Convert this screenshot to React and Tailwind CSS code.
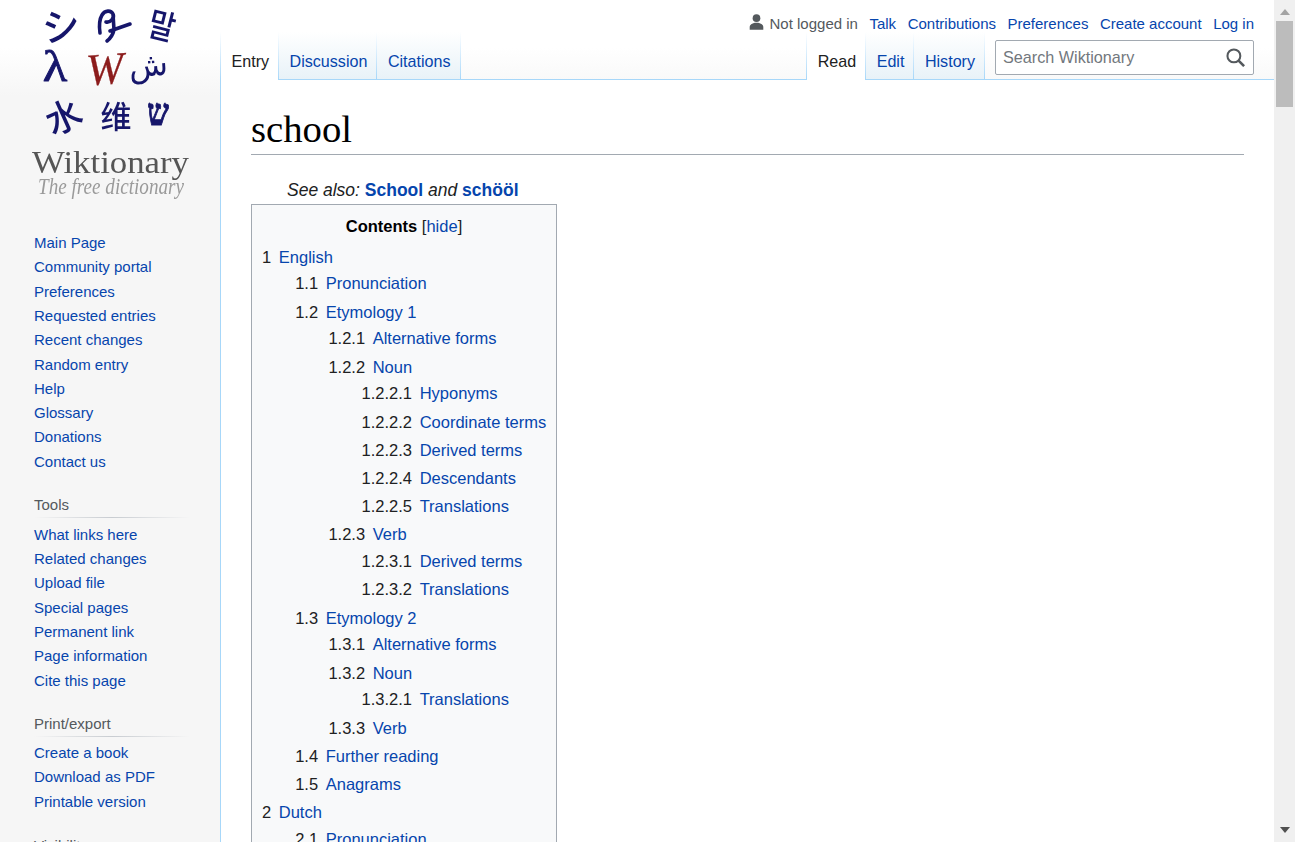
import React from "react";

const nav1 = ["Main Page","Community portal","Preferences","Requested entries","Recent changes","Random entry","Help","Glossary","Donations","Contact us"];
const nav2 = ["What links here","Related changes","Upload file","Special pages","Permanent link","Page information","Cite this page"];
const nav3 = ["Create a book","Download as PDF","Printable version"];

const toc = [
  ["1","English",[
    ["1.1","Pronunciation"],
    ["1.2","Etymology 1",[
      ["1.2.1","Alternative forms"],
      ["1.2.2","Noun",[
        ["1.2.2.1","Hyponyms"],["1.2.2.2","Coordinate terms"],["1.2.2.3","Derived terms"],["1.2.2.4","Descendants"],["1.2.2.5","Translations"],
      ]],
      ["1.2.3","Verb",[["1.2.3.1","Derived terms"],["1.2.3.2","Translations"]]],
    ]],
    ["1.3","Etymology 2",[
      ["1.3.1","Alternative forms"],
      ["1.3.2","Noun",[["1.3.2.1","Translations"]]],
      ["1.3.3","Verb"],
    ]],
    ["1.4","Further reading"],
    ["1.5","Anagrams"],
  ]],
  ["2","Dutch",[["2.1","Pronunciation"]]],
];

function TocList({ items, nested }) {
  return (
    <ul className={nested ? "ml-[33.2px]" : ""}>
      {items.map(([n, t, kids]) => (
        <li key={n} className="mb-[1.3px]">
          <div className="leading-[26.88px] whitespace-nowrap">
            <span className="text-[#202122] pr-[7.6px]">{n}</span>
            <a className="text-[#0645ad]">{t}</a>
          </div>
          {kids && <TocList items={kids} nested />}
        </li>
      ))}
    </ul>
  );
}

function Portal({ title, items, className = "", ruleClass = "" }) {
  return (
    <div className={className}>
      {title && (
        <>
          <div className="text-[15px] leading-[24px] text-[#54595d]">{title}</div>
          <div className={`h-px w-[156px] bg-gradient-to-r from-[#f6f6f6] via-[#c8ccd1] to-[#f6f6f6] ${ruleClass}`} />
        </>
      )}
      <ul>
        {items.map((t) => (
          <li key={t} className="text-[15px] leading-[24.3px] text-[#0645ad] whitespace-nowrap">{t}</li>
        ))}
      </ul>
    </div>
  );
}

function Logo() {
  const navy = "#16166b";
  return (
    <svg width="220" height="208" viewBox="0 0 220 208" className="block blur-[0.4px]">
      <g fill={navy} textAnchor="middle">
        <text fontSize="38" fontWeight="500" fontFamily="'Noto Sans CJK JP', sans-serif" transform="translate(63,40) rotate(-8)">シ</text>
        <text fontSize="34" fontWeight="500" fontFamily="'Noto Sans CJK KR', sans-serif" transform="translate(159,38) rotate(14) scale(0.85,1)">말</text>
        <text fontSize="44" fontWeight="400" stroke={navy} strokeWidth="0.8" fontFamily="'Liberation Serif', serif" transform="translate(55,81) scale(1.15,1)">λ</text>
        <text fontSize="32" fontWeight="400" fontFamily="'DejaVu Sans', sans-serif" transform="translate(149,76) rotate(-4)">ش</text>
        <text fontSize="36" fontWeight="500" fontFamily="'Noto Sans CJK SC', sans-serif" transform="translate(69,129) rotate(-24)">水</text>
        <text fontSize="31" fontWeight="500" fontFamily="'Noto Sans CJK SC', sans-serif" transform="translate(116,128)">维</text>
        <text fontSize="36" fontWeight="700" stroke={navy} strokeWidth="0.9" fontFamily="'DejaVu Serif', serif" transform="translate(158,125) scale(0.85,1.05)">ש</text>
      </g>
      <path d="M100 33C99 26 99 20 102 15C105 10 111 10 113 14C115 18 110 23 106 22M113 14L114 30C113 34 111 38 107 41M110 31L130 24"
        fill="none" stroke={navy} strokeWidth="3.6" strokeLinecap="round" strokeLinejoin="round" />
      <text x="105" y="84" fontSize="45" fontStyle="italic" fontWeight="400" textAnchor="middle" fill="#8c1c1c" stroke="#8c1c1c" strokeWidth="0.3" fontFamily="'Liberation Serif', serif" transform="rotate(-4 105 70)">W</text>
      <text x="32" y="173" fontSize="32" fill="#555" fontFamily="'Liberation Serif', serif" textLength="157" lengthAdjust="spacingAndGlyphs">Wiktionary</text>
      <text x="38" y="194" fontSize="23" fontStyle="italic" fill="#9a9a9a" fontFamily="'Liberation Serif', serif" textLength="146" lengthAdjust="spacingAndGlyphs">The free dictionary</text>
    </svg>
  );
}

function Tab({ label, selected }) {
  return (
    <div className={`relative h-[48px] pt-[15px] pl-[10.5px] pr-[10px] text-[16.1px] leading-[28px] whitespace-nowrap after:absolute after:right-0 after:top-0 after:bottom-0 after:w-px after:bg-gradient-to-b after:from-white after:to-[#a7d7f9] ${selected ? "bg-white text-[#202122]" : "bg-gradient-to-b from-white to-[#e8f2f8] text-[#0645ad] border-b border-b-[#a7d7f9]"}`}>
      {label}
    </div>
  );
}

export default function App() {
  return (
    <div className="flex h-[842px] w-full overflow-hidden font-['Liberation_Sans',Arial,sans-serif] text-[#202122] text-[16.5px]">
      <div className="flex-1 min-w-0 flex bg-[linear-gradient(to_bottom,#ffffff_48px,#f6f6f6_96px)]">
        <aside className="w-[220px] shrink-0">
          <Logo />
          <div className="pl-[34px] pt-[23.1px]">
            <Portal items={nav1} />
            <Portal title="Tools" items={nav2} className="mt-[18.7px]" ruleClass="mb-[5px]" />
            <Portal title="Print/export" items={nav3} className="mt-[19.2px]" ruleClass="mb-[4px]" />
            <div className="mt-[20px] text-[15px] leading-[24px] text-[#54595d]">Visibility</div>
          </div>
        </aside>
        <main className="flex-1 min-w-0 flex flex-col">
          <header className="h-[80px] relative shrink-0">
            <div className="flex justify-end items-center gap-[11.5px] pr-[20px] pt-[14px] text-[15px] leading-[20px] whitespace-nowrap">
              <span className="flex items-center text-[#54595d]">
                <svg width="17" height="18" viewBox="0 0 20 20" className="mr-[5px] -mt-[4px]" fill="#54595d"><path d="M10 11c-5.92 0-8 3-8 5v3h16v-3c0-2-2.08-5-8-5z"/><circle cx="10" cy="5.5" r="4.5"/></svg>
                Not logged in
              </span>
              {["Talk","Contributions","Preferences","Create account","Log in"].map((t) => (
                <a key={t} className="text-[#0645ad]">{t}</a>
              ))}
            </div>
            <div className="absolute left-0 right-0 bottom-0 flex items-end">
              <div className="w-[1px] h-[48px] bg-gradient-to-b from-white to-[#a7d7f9]" />
              <Tab label="Entry" selected />
              <Tab label="Discussion" />
              <Tab label="Citations" />
              <div className="flex-1" />
              <div className="w-[1px] h-[48px] bg-gradient-to-b from-white to-[#a7d7f9]" />
              <Tab label="Read" selected />
              <Tab label="Edit" />
              <Tab label="History" />
              <div className="ml-[10px] mr-[20px] mb-[5px] w-[259px] h-[35px] bg-white border border-[#a2a9b1] rounded-[2px] flex items-center justify-between pl-[7px] pr-[8px]">
                <span className="text-[16.2px] text-[#72777d]">Search Wiktionary</span>
                <svg width="19" height="19" viewBox="0 0 13 13" fill="none" stroke="#54595d" strokeWidth="1.4"><circle cx="5.4" cy="5.4" r="4.4"/><path d="M8.6 8.6L12.4 12.4" strokeWidth="1.8"/></svg>
              </div>
            </div>
          </header>
          <section className="flex-1 min-h-0 bg-white border-l border-t border-[#a7d7f9] -mt-px pl-[30px] pr-[30px] overflow-hidden">
            <h1 className="font-['Liberation_Serif','Times_New_Roman',serif] text-[38.7px] leading-[46px] text-black border-b border-[#a2a9b1] pt-[26px] pb-[1px] h-[75px]">school</h1>
            <div className="pl-[36px] mt-[24px] text-[17.5px] leading-[22px] italic text-[#202122] whitespace-nowrap">
              See also: <a className="not-italic font-bold text-[#0645ad]">School</a> and <a className="not-italic font-bold text-[#0645ad]">schööl</a>
            </div>
            <div className="mt-[3px] w-[306px] bg-[#f8f9fa] border border-[#a2a9b1] px-[10px] pt-[8px]">
              <div className="text-center leading-[26px] pb-[4.5px]">
                <b className="text-black">Contents</b> <span>[<a className="text-[#0645ad]">hide</a>]</span>
              </div>
              <TocList items={toc} />
            </div>
          </section>
        </main>
      </div>
      <div className="w-[21px] shrink-0 bg-[#f0f0f0] flex flex-col items-center">
        <svg width="10" height="6" viewBox="0 0 10 6" className="mt-[9px]" fill="#a3a3a3"><path d="M5 0l5 6H0z"/></svg>
        <div className="w-[17px] h-[86px] mt-[6px] bg-[#bcbcbc]" />
        <div className="flex-1" />
        <svg width="10" height="6" viewBox="0 0 10 6" className="mb-[9px]" fill="#505050"><path d="M5 6L0 0h10z"/></svg>
      </div>
    </div>
  );
}
